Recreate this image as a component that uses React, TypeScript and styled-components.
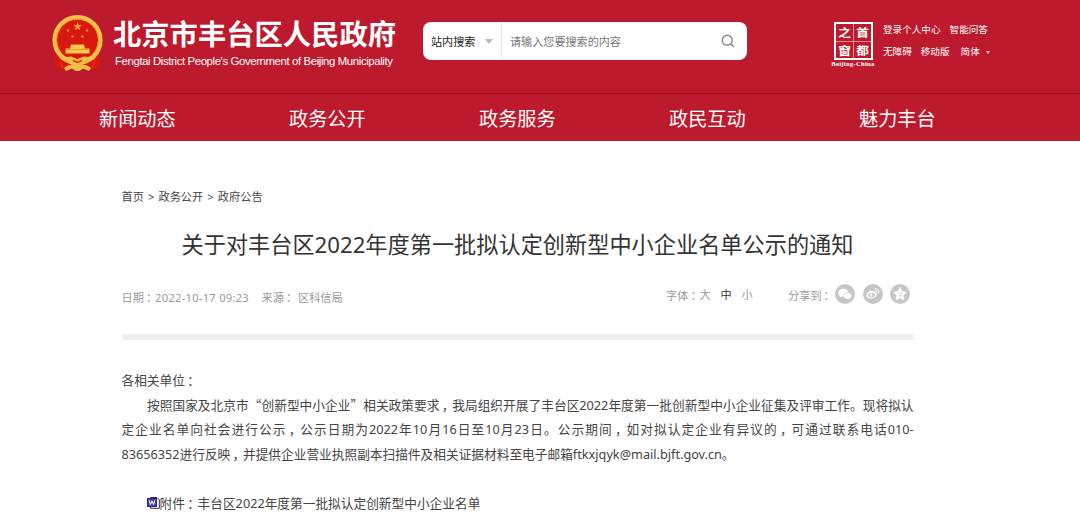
import React from "react";
import styled, { createGlobalStyle } from "styled-components";

const GlobalStyle = createGlobalStyle`
  * { box-sizing: border-box; }
  body {
    margin: 0;
    background: #fff;
    font-family: "Noto Sans", "Noto Sans CJK SC", sans-serif;
    color: #444;
  }
  a { color: inherit; text-decoration: none; }
`;

const Page = styled.div`
  width: 1080px;
  height: 522px;
  overflow: hidden;
`;

const Header = styled.header`
  height: 141px;
  background: #be1a2d;
  color: #fff;
`;

const Masthead = styled.div`
  display: flex;
  align-items: flex-start;
  height: 94px;
  padding-left: 51px;
  border-bottom: 1px solid #98101f;
`;

const Emblem = styled.svg`
  flex: none;
  width: 53px;
  height: 58px;
  margin-top: 14px;
`;

const Brand = styled.div`
  width: 309px;
  padding: 15px 0 0 9px;
  white-space: nowrap;
`;

const SiteName = styled.div`
  font: 700 28.3px/36px "Noto Sans CJK SC", sans-serif;
`;

const SiteNameEn = styled.div`
  margin-top: 2px;
  padding-left: 2px;
  font: 11.4px/16px "Liberation Sans", sans-serif;
  letter-spacing: -0.39px;
`;

const SearchBox = styled.div`
  display: flex;
  align-items: center;
  width: 324px;
  height: 38px;
  margin: 22px 0 0 10px;
  background: #fff;
  border-radius: 8px;
  font-size: 11.1px;
  white-space: nowrap;
`;

const Scope = styled.div`
  display: flex;
  align-items: center;
  gap: 10px;
  width: 79px;
  height: 36px;
  padding-left: 8px;
  border-right: 1px solid #e6e6e6;
  color: #222;
`;

const Caret = styled.span`
  border: 4px solid transparent;
  border-top: 5px solid #bbb;
  border-bottom: 0;
`;

const Placeholder = styled.div`
  flex: 1;
  padding-left: 8px;
  color: #777;
`;

const SearchIcon = styled.svg`
  width: 14px;
  height: 14px;
  margin-right: 12px;
`;

const Seal = styled.div`
  width: 44px;
  margin: 22px 0 0 84px;
  display: flex;
  flex-direction: column;
  align-items: center;
`;

const SealGrid = styled.div`
  display: grid;
  grid-template-columns: 1fr 1fr;
  grid-template-rows: 1fr 1fr;
  gap: 1px;
  width: 39px;
  height: 38px;
  border: 2px solid #fff;
  background: #e58a94;
`;

const SealChar = styled.span`
  font: 700 11px/12px "Noto Sans CJK SC", sans-serif;
  transform: scaleX(1.15);
`;

const SealCell = styled.span`
  display: flex;
  align-items: center;
  justify-content: center;
  background: #be1a2d;
`;

const SealLabel = styled.div`
  font: 700 6.7px/7px "Liberation Serif", serif;
  letter-spacing: 0.25px;
  white-space: nowrap;
`;

const Tools = styled.div`
  margin: 19px 0 0 8px;
  font-size: 9.6px;
  line-height: 22px;
  white-space: nowrap;
`;

const ToolRow = styled.div`
  display: flex;
  gap: 9px;
  align-items: center;
`;

const Language = styled.a`
  display: flex;
  align-items: center;
  gap: 6px;
  margin-left: 2px;
`;

const SmallCaret = styled.span`
  border: 2px solid transparent;
  border-top: 3px solid #f6c9ce;
  border-bottom: 0;
`;

const Nav = styled.nav`
  display: flex;
  height: 47px;
  padding-left: 99px;
  font-size: 19.2px;
  line-height: 49px;
`;

const NavItem = styled.a`
  width: 190px;
`;

const Article = styled.main`
  width: 792px;
  margin-left: 121.5px;
  padding-top: 47px;
`;

const Breadcrumb = styled.div`
  height: 18px;
  font-size: 11.2px;
  line-height: 18px;
  word-spacing: 1.2px;
  color: #444;
`;

const Title = styled.h1`
  margin: 21px 0 0;
  height: 36px;
  font-size: 22.2px;
  font-weight: 400;
  line-height: 36px;
  text-align: center;
  white-space: nowrap;
  color: #333;
`;

const Meta = styled.div`
  display: flex;
  height: 70px;
  padding-top: 22px;
  font-size: 11.2px;
  line-height: 20px;
  white-space: nowrap;
  color: #999;
`;

const DateText = styled.span`
  width: 140px;
  margin-top: 2px;
`;

const DateValue = styled.span`
  letter-spacing: 0.25px;
`;

const Source = styled.span`
  width: 404.5px;
  margin-top: 2px;
`;

const FontSizes = styled.div`
  display: flex;
  width: 122px;
`;

const SizeOption = styled.a<{ $active?: boolean }>`
  width: 21px;
  color: ${(p) => (p.$active ? "#333" : "#999")};
`;

const Share = styled.div`
  display: flex;
  align-items: center;
  height: 20px;
  gap: 7.5px;
`;

const ShareLabel = styled.span`
  width: 39.5px;
`;

const ShareIcon = styled.svg`
  width: 20px;
  height: 20px;
  margin-top: -2px;
`;

const Divider = styled.div`
  height: 6px;
  margin-top: 1px;
  background: #f0f0f0;
`;

const Body = styled.div`
  padding-top: 28px;
  font-size: 12.7px;
  line-height: 24.5px;
  color: #444;
`;

const Line = styled.div<{ $indent?: boolean; $justify?: boolean }>`
  height: 24.5px;
  padding-left: ${(p) => (p.$indent ? "25.5px" : "0")};
  text-align-last: ${(p) => (p.$justify ? "justify" : "left")};
  text-justify: inter-character;
  white-space: nowrap;
`;

const Quote = styled.span`
  font-family: "Noto Sans CJK SC", sans-serif;
`;

const Mark = styled.span`
  font-family: "Noto Sans CJK SC", sans-serif;
  font-feature-settings: "halt";
  margin-left: 0.18em;
  margin-right: 0.32em;
`;

const Attachment = styled.a`
  display: flex;
  align-items: center;
  height: 24.5px;
  margin-top: 24.5px;
  padding-left: 25px;
  white-space: nowrap;
`;

const DocIcon = styled.svg`
  width: 13px;
  height: 13px;
`;

const navItems = ["新闻动态", "政务公开", "政务服务", "政民互动", "魅力丰台"];
const sealChars = ["之", "首", "窗", "都"];

/* Centres full-width commas and colons in their cell and sets curly quotes full width. */
function Prose({ text }: { text: string }) {
  return (
    <span>
      {text.split(/([，：“”])/).map((part, i) => {
        if (part === "，" || part === "：") return <Mark key={i}>{part}</Mark>;
        if (part === "“" || part === "”") return <Quote key={i}>{part}</Quote>;
        return part;
      })}
    </span>
  );
}

function NationalEmblem() {
  return (
    <Emblem viewBox="0 0 53 58">
      <path d="M7 38 L3 43 L5 53 L15 57 L26 53 L38 57 L48 53 L50 43 L45 38Z" fill="#d9170f" />
      <circle cx="26.5" cy="26" r="22.8" fill="#d8190f" stroke="#f5c04a" strokeWidth="4.6" />
      <circle cx="26.5" cy="26" r="21" fill="none" stroke="#e3982e" strokeWidth="0.8" />
      <path d="M26.5 8 l1.1 3.100 h3.300 l-2.700 2 1 3.200 -2.700-2 -2.700 2 1-3.200 -2.700-2 h3.300z" fill="#f3a83c" />
      <g fill="#ea8433">
        <circle cx="17" cy="16.500" r="1.200" />
        <circle cx="36" cy="16.500" r="1.200" />
        <circle cx="21.500" cy="22.500" r="1.200" />
        <circle cx="31.500" cy="22.500" r="1.200" />
      </g>
      <path d="M20 30.500 h13 l1 4 h4.500 v5 H14.500 v-5 h4.500z" fill="#f8c850" />
      <path d="M15 35.500 h23" stroke="#e48c23" strokeWidth="0.8" />
      <path d="M7 40 Q13 44 20 42.500 L26.500 45 L33 42.500 Q40 44 46 40 L43 45.500 Q38 48 33 48 L30 50 Q37 51 40 54 L38 57 L32 54.500 L28.500 57 H24.500 L21 54.500 L15 57 L13 54 Q16 51 23 50 L20 48 Q14 48 10 45.500Z" fill="#f5bd48" />
      <path d="M22 46.500 L26.500 48.500 L31 46.500" fill="none" stroke="#dc3517" strokeWidth="1.400" />
      <path d="M9 47 L12 54 M44 47 L41 54" stroke="#e12b16" strokeWidth="2" />
    </Emblem>
  );
}

function WechatIcon() {
  return (
    <ShareIcon viewBox="0 0 20 20">
      <circle cx="10" cy="10" r="10" fill="#c6c6c6" />
      <path d="M8.300 4.700c-3 0-5.100 1.800-5.100 4.100 0 1.300.7 2.400 1.800 3.100l-.5 1.700 2-1c.6.200 1.200.3 1.900.3 2.900 0 5.100-1.800 5.100-4.100S11.200 4.700 8.300 4.700z" fill="#fff" />
      <path d="M12.600 8.400c-2.400 0-4.200 1.500-4.200 3.400s1.800 3.400 4.200 3.400c.5 0 1-.1 1.400-.2l1.700.9-.4-1.500c1-.6 1.500-1.600 1.500-2.600 0-1.900-1.800-3.400-4.200-3.400z" fill="#fff" stroke="#c6c6c6" strokeWidth="0.6" />
    </ShareIcon>
  );
}

function WeiboIcon() {
  return (
    <ShareIcon viewBox="0 0 20 20">
      <circle cx="10" cy="10" r="10" fill="#c6c6c6" />
      <path d="M8.600 6.600c.9-.4 1.800-.2 1.500 1.300 1.500-.6 2.900-.4 2.500 1.100 1.200.4 1.700 1.200 1.300 2.300-.7 1.900-3.100 3.300-5.900 3.300-2.700 0-4.700-1.300-4.700-3.200 0-1.800 2.500-4 5.300-4.800z" fill="#fff" />
      <ellipse cx="8.600" cy="11.200" rx="3.500" ry="2.300" fill="#c6c6c6" transform="rotate(-8 8.600 11.200)" />
      <circle cx="8.200" cy="11.400" r="1.300" fill="#fff" />
      <path d="M11.800 4.700c2.700-.6 4.700 1.500 3.900 4.100M12 6.700c1.300-.3 2.100.6 1.800 1.800" fill="none" stroke="#fff" strokeWidth="1" strokeLinecap="round" />
    </ShareIcon>
  );
}

function StarIcon() {
  return (
    <ShareIcon viewBox="0 0 20 20">
      <circle cx="10" cy="10" r="10" fill="#c6c6c6" />
      <path d="M10 3.400l2 4.200 4.600.6-3.400 3.200.9 4.600L10 13.800 5.900 16l.9-4.600-3.400-3.200 4.600-.6z" fill="#fff" stroke="#fff" strokeWidth="0.6" strokeLinejoin="round" />
      <path d="M7.600 9.200 Q10 8.500 12.300 9 L8.800 11.800 Q10.700 12.300 12.500 11.900" fill="none" stroke="#c6c6c6" strokeWidth="0.7" />
    </ShareIcon>
  );
}

export default function App() {
  return (
    <Page>
      <GlobalStyle />
      <Header>
        <Masthead>
          <NationalEmblem />
          <Brand>
            <SiteName>北京市丰台区人民政府</SiteName>
            <SiteNameEn>Fengtai District People's Government of Beijing Municipality</SiteNameEn>
          </Brand>
          <SearchBox>
            <Scope>
              站内搜索
              <Caret />
            </Scope>
            <Placeholder>请输入您要搜索的内容</Placeholder>
            <SearchIcon viewBox="0 0 14 14" fill="none" stroke="#888" strokeWidth="1.4">
              <circle cx="6.200" cy="6.200" r="5" />
              <path d="M9.800 9.800 L13 13" />
            </SearchIcon>
          </SearchBox>
          <Seal>
            <SealGrid>
              {sealChars.map((char) => (
                <SealCell key={char}>
                  <SealChar>{char}</SealChar>
                </SealCell>
              ))}
            </SealGrid>
            <SealLabel>Beijing-China</SealLabel>
          </Seal>
          <Tools>
            <ToolRow>
              <a>登录个人中心</a>
              <a>智能问答</a>
            </ToolRow>
            <ToolRow>
              <a>无障碍</a>
              <a>移动版</a>
              <Language>
                简体
                <SmallCaret />
              </Language>
            </ToolRow>
          </Tools>
        </Masthead>
        <Nav>
          {navItems.map((item) => (
            <NavItem key={item}>{item}</NavItem>
          ))}
        </Nav>
      </Header>
      <Article>
        <Breadcrumb>首页 &gt; 政务公开 &gt; 政府公告</Breadcrumb>
        <Title>关于对丰台区2022年度第一批拟认定创新型中小企业名单公示的通知</Title>
        <Meta>
          <DateText>
            <Prose text="日期：" />
            <DateValue>2022-10-17 09:23</DateValue>
          </DateText>
          <Source>
            <Prose text="来源： 区科信局" />
          </Source>
          <FontSizes>
            <Prose text="字体：" />
            <SizeOption>大</SizeOption>
            <SizeOption $active>中</SizeOption>
            <SizeOption>小</SizeOption>
          </FontSizes>
          <Share>
            <ShareLabel>
              <Prose text="分享到：" />
            </ShareLabel>
            <WechatIcon />
            <WeiboIcon />
            <StarIcon />
          </Share>
        </Meta>
        <Divider />
        <Body>
          <Line>
            <Prose text="各相关单位：" />
          </Line>
          <Line $indent $justify>
            <Prose text="按照国家及北京市“创新型中小企业”相关政策要求，我局组织开展了丰台区2022年度第一批创新型中小企业征集及评审工作。现将拟认" />
          </Line>
          <Line $justify>
            <Prose text="定企业名单向社会进行公示，公示日期为2022年10月16日至10月23日。公示期间，如对拟认定企业有异议的，可通过联系电话010-" />
          </Line>
          <Line>
            <Prose text="83656352进行反映，并提供企业营业执照副本扫描件及相关证据材料至电子邮箱ftkxjqyk@mail.bjft.gov.cn。" />
          </Line>
          <Attachment>
            <DocIcon viewBox="0 0 13 13">
              <path d="M3.500 1.500 H10 L12.300 3.800 V12.300 H3.500Z" fill="#fff" stroke="#333" />
              <rect x="0.500" y="2.500" width="9" height="8" fill="#4a48a8" stroke="#25237c" />
              <path d="M2.200 4.500 L3.500 8.500 L5 5 L6.500 8.500 L7.800 4.500" fill="none" stroke="#fff" />
            </DocIcon>
            <Prose text="附件：丰台区2022年度第一批拟认定创新型中小企业名单" />
          </Attachment>
        </Body>
      </Article>
    </Page>
  );
}
